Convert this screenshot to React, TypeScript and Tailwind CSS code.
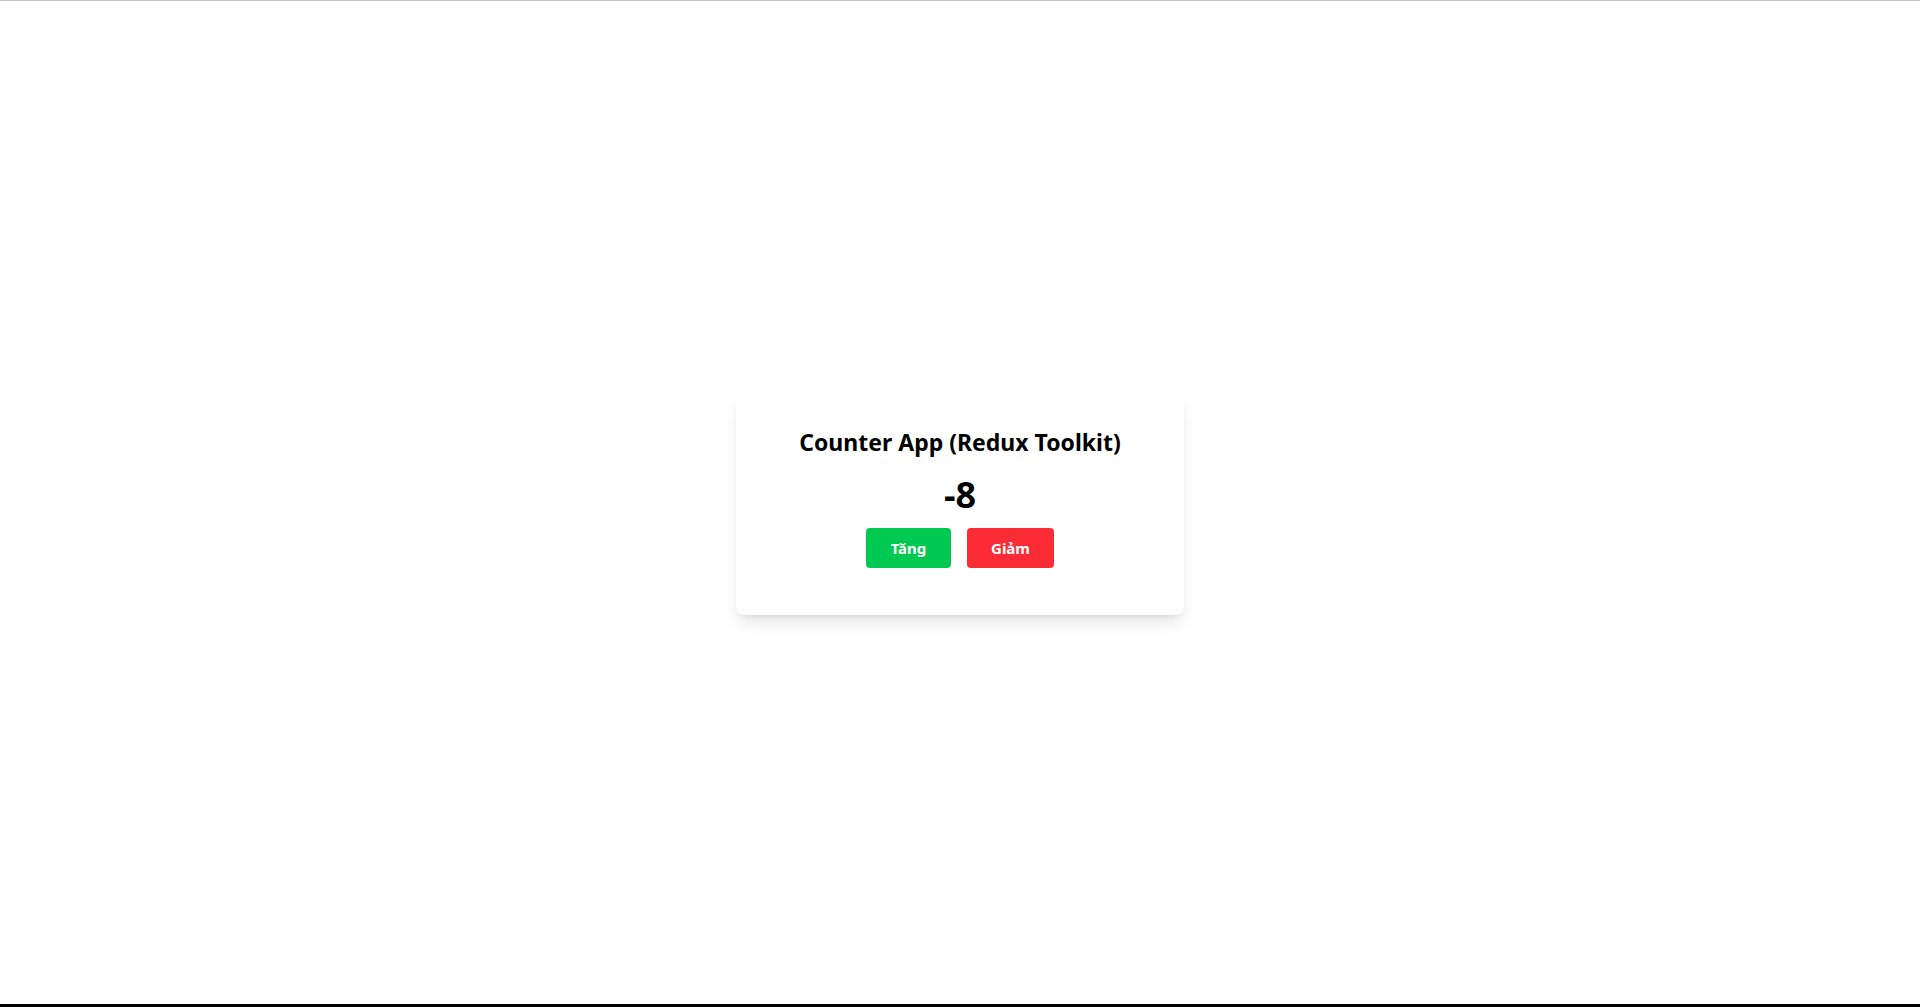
import { useState } from "react";

export default function App() {
  const [count, setCount] = useState(-8);

  return (
    <div
      className="flex h-screen w-full items-center justify-center border-t border-[#c4c4c4] border-b-[3px] border-b-black bg-white"
      style={{ fontFamily: '"Noto Sans", "Open Sans", sans-serif' }}
    >
      <div className="w-[448px] rounded-lg bg-white px-8 pt-[35px] pb-[47px] text-center shadow-lg">
        <h1 className="mb-[17px] text-[23px] leading-8 font-bold text-black">
          Counter App (Redux Toolkit)
        </h1>
        <div className="mb-[13px] text-4xl font-bold text-black">{count}</div>
        <div className="flex justify-center gap-4">
          <button
            onClick={() => setCount(count + 1)}
            className="w-[85px] rounded bg-green-500 py-2 text-[15px] leading-6 font-bold text-white"
          >
            Tăng
          </button>
          <button
            onClick={() => setCount(count - 1)}
            className="w-[87px] rounded bg-red-500 py-2 text-[15px] leading-6 font-bold text-white"
          >
            Giảm
          </button>
        </div>
      </div>
    </div>
  );
}
